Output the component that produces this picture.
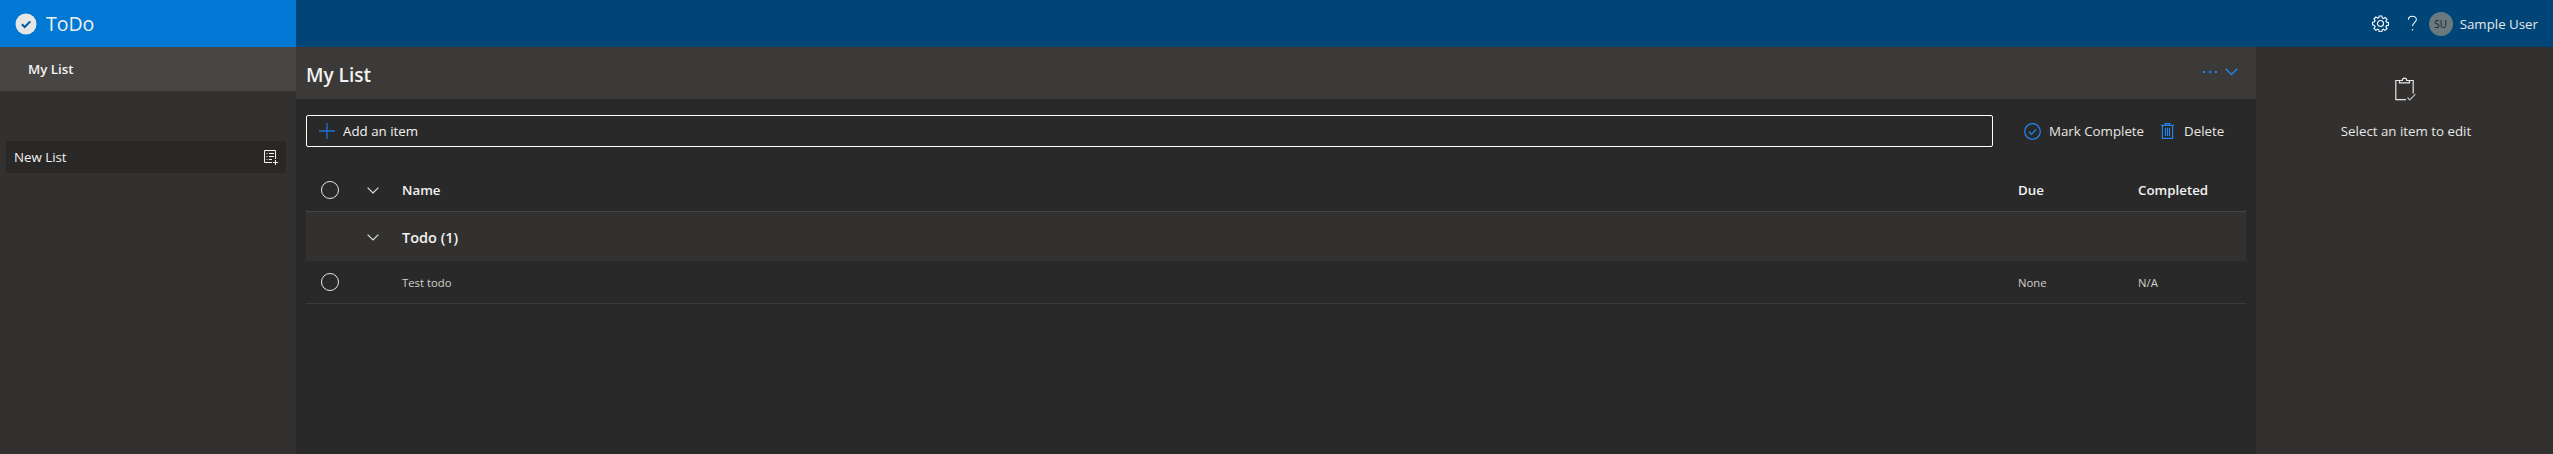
<div class="app">
	<header class="topbar">
		<div class="brand">
			<svg class="logo" viewBox="0 0 22 22" width="22" height="22">
				<circle cx="11" cy="11" r="10.5" fill="#e6e6e6" />
				<path d="M6.800 11.200l2.900 2.800 5.600-5.600" fill="none" stroke="#005a9e" stroke-width="2" />
			</svg>
			<span>ToDo</span>
		</div>
		<div class="top-actions">
			<svg class="gear" viewBox="0 0 18 18" width="17" height="17" fill="none" stroke="#fff" stroke-width="1.200">
				<path d="M7.600 1h2.800l.4 2.100 1.300.6 1.800-1.200 2 2-1.200 1.800.6 1.300 2.100.4v2.800l-2.100.4-.6 1.300 1.200 1.800-2 2-1.800-1.200-1.300.6-.4 2.100H7.600l-.4-2.100-1.300-.6-1.800 1.200-2-2 1.200-1.800-.6-1.300L.6 10.400V7.600l2.100-.4.6-1.300-1.200-1.800 2-2 1.800 1.200 1.300-.6z" />
				<circle cx="9" cy="9" r="3.200" />
			</svg>
			<svg class="help" viewBox="0 0 12 18" width="11" height="17" fill="none" stroke="#fff" stroke-width="1.100">
				<path d="M1.500 4.800C1.500 2.600 3.400 1 5.800 1c2.500 0 4.400 1.500 4.400 3.700 0 3.300-4.200 3.400-4.200 7.300" />
				<circle cx="6" cy="15.800" r=".8" fill="#fff" stroke="none" />
			</svg>
			<div class="avatar">SU</div>
			<span class="user">Sample User</span>
		</div>
	</header>

	<div class="body">
		<aside class="sidebar">
			<div class="list-selected">My List</div>
			<div class="new-list">
				<span>New List</span>
				<svg viewBox="0 0 15 16" width="15" height="16" fill="none" stroke="#f3f2f1" stroke-width="1">
					<path d="M12.500 10V1.500H1.500v12H9" />
					<path d="M3.500 4.500h1M6 4.500h5M3.500 7.500h1M6 7.500h5M3.500 10.500h1M6 10.500h3" />
					<path d="M10 13.500h5M12.500 11v5" />
				</svg>
			</div>
		</aside>

		<main class="main">
			<div class="main-head">
				<h1>My List</h1>
				<div class="head-icons">
					<svg viewBox="0 0 14 4" width="14" height="4" fill="#1e88f0">
						<rect x="0" y="1" width="2" height="2" />
						<rect x="6" y="1" width="2" height="2" />
						<rect x="12" y="1" width="2" height="2" />
					</svg>
					<svg viewBox="0 0 13 8" width="13" height="8" fill="none" stroke="#1e88f0" stroke-width="1.300">
						<path d="M.7 .7L6.500 6.500 12.300 .7" />
					</svg>
				</div>
			</div>

			<div class="toolbar">
				<div class="add-item">
					<svg viewBox="0 0 16 16" width="16" height="16" fill="none" stroke="#1a73d9" stroke-width="1.300">
						<path d="M8 0v16M0 8h16" />
					</svg>
					<span>Add an item</span>
				</div>
				<div class="tool-buttons">
					<div class="tool mark">
						<svg viewBox="0 0 17 17" width="17" height="17" fill="none" stroke="#1e88f0" stroke-width="1.200">
							<circle cx="8.500" cy="8.500" r="7.800" />
							<path d="M4.900 8.800l2.600 2.500 4.800-5" />
						</svg>
						<span>Mark Complete</span>
					</div>
					<div class="tool trash">
						<svg viewBox="0 0 14 17" width="13" height="16" fill="none" stroke="#1e88f0" stroke-width="1.200">
							<path d="M0 2.500h14M4.500 2.500V.6h5v1.900M1.500 2.500v13.900h11V2.500" />
							<path d="M4.800 5v9M7 5v9M9.200 5v9" />
						</svg>
						<span>Delete</span>
					</div>
				</div>
			</div>

			<div class="table">
				<div class="row head">
					<span class="check"><span class="radio"></span></span>
					<span class="chev"><svg viewBox="0 0 12 7" width="12" height="7" fill="none" stroke="#e6e6e6" stroke-width="1.100"><path d="M.6 .6L6 6 11.400 .6" /></svg></span>
					<span>Name</span>
					<span>Due</span>
					<span>Completed</span>
				</div>
				<div class="row group">
					<span class="check"></span>
					<span class="chev"><svg viewBox="0 0 12 7" width="12" height="7" fill="none" stroke="#e6e6e6" stroke-width="1.100"><path d="M.6 .6L6 6 11.400 .6" /></svg></span>
					<span class="group-name">Todo (1)</span>
				</div>
				<div class="row item">
					<span class="check"><span class="radio"></span></span>
					<span class="chev"></span>
					<span>Test todo</span>
					<span>None</span>
					<span>N/A</span>
				</div>
			</div>
		</main>

		<aside class="details">
			<svg viewBox="0 0 22 24" width="22" height="24" fill="none" stroke="#e6e6e6" stroke-width="1.200">
				<path d="M4.500 3.500H.8v19.200H11M14.500 3.500h3.700v13" />
				<path d="M4.500 5.800V3.500h2.800c0-3.200 4.400-3.200 4.400 0h2.800v2.300z" />
				<path d="M12.500 20.500l2.300 2.300 5.600-5.600" stroke="#bdbdbd" />
			</svg>
			<p>Select an item to edit</p>
		</aside>
	</div>
</div>

<style>
	:global(body) {
		margin: 0;
		background: #292929;
	}

	.app {
		height: 454px;
		display: flex;
		flex-direction: column;
		font-family: "Open Sans", "Noto Sans", sans-serif;
		font-size: 13.3px;
		color: #f3f2f1;
		overflow: hidden;
	}

	.topbar {
		height: 47px;
		flex: none;
		display: flex;
		justify-content: space-between;
		background: #004578;
	}

	.brand {
		width: 296px;
		background: #0078d4;
		display: flex;
		align-items: center;
		gap: 9px;
		padding-left: 15px;
		box-sizing: border-box;
		font-size: 19.5px;
		color: #f0f0f0;
	}

	.top-actions {
		display: flex;
		align-items: center;
		padding-right: 15px;
	}

	.gear {
		margin-right: 18px;
	}

	.help {
		margin-right: 11px;
	}

	.avatar {
		width: 24px;
		height: 24px;
		border-radius: 50%;
		background: #69797e;
		color: #222;
		font-size: 10px;
		display: flex;
		align-items: center;
		justify-content: center;
		margin-right: 7px;
	}

	.user {
		color: #e8e8e8;
	}

	.body {
		flex: 1;
		display: flex;
		min-height: 0;
	}

	.sidebar {
		width: 296px;
		flex: none;
		background: #323130;
	}

	.list-selected {
		height: 44px;
		background: #484644;
		padding-left: 28px;
		display: flex;
		align-items: center;
		font-weight: 600;
	}

	.new-list {
		margin: 50px 10px 0 6px;
		height: 32px;
		padding: 0 8px;
		background: #292827;
		border-radius: 2px;
		display: flex;
		align-items: center;
		justify-content: space-between;
	}

	.main {
		flex: 1;
		min-width: 0;
		background: #292929;
	}

	.main-head {
		height: 52px;
		box-sizing: border-box;
		background: #3b3a39;
		display: flex;
		align-items: center;
		justify-content: space-between;
		padding: 3px 18px 0 10px;
	}

	h1 {
		margin: 0;
		font-size: 19px;
		font-weight: 600;
	}

	.head-icons {
		display: flex;
		align-items: center;
		gap: 8px;
		margin-top: -5px;
	}

	.toolbar {
		display: flex;
		align-items: center;
		margin-top: 16px;
		padding: 0 10px;
	}

	.add-item {
		flex: 1;
		height: 32px;
		box-sizing: border-box;
		border: 1px solid #fff;
		border-radius: 2px;
		display: flex;
		align-items: center;
		gap: 8px;
		padding-left: 12px;
	}

	.tool-buttons {
		width: 253px;
		flex: none;
		display: flex;
		align-items: center;
		padding-left: 31px;
		box-sizing: border-box;
		gap: 17px;
	}

	.tool {
		display: flex;
		align-items: center;
		gap: 8px;
		color: #e8e6e3;
	}

	.trash {
		gap: 10px;
	}

	.table {
		margin: 0 10px;
	}

	.row {
		display: grid;
		grid-template-columns: 48px 48px 1fr 120px 108px;
		align-items: center;
	}

	.head {
		height: 65px;
		box-sizing: border-box;
		padding-top: 22px;
		border-bottom: 1px solid #484644;
		font-weight: 600;
	}

	.group {
		height: 49px;
		box-sizing: border-box;
		padding-top: 2px;
		background: #323130;
	}

	.group-name {
		font-size: 14.5px;
		font-weight: 600;
	}

	.item {
		height: 43px;
		box-sizing: border-box;
		border-bottom: 1px solid #3b3a39;
		font-size: 11.3px;
		color: #d2d0ce;
	}

	.check {
		display: flex;
		justify-content: center;
	}

	.radio {
		width: 16px;
		height: 16px;
		border: 1.500px solid #e6e6e6;
		border-radius: 50%;
	}

	.chev {
		display: flex;
		align-items: center;
		padding-left: 13px;
	}

	.details {
		width: 297px;
		flex: none;
		background: #323130;
		display: flex;
		flex-direction: column;
		align-items: center;
		padding: 30px 0 0 3px;
		box-sizing: border-box;
	}

	.details p {
		margin: 21px 0 0;
		color: #e8e6e3;
	}
</style>
